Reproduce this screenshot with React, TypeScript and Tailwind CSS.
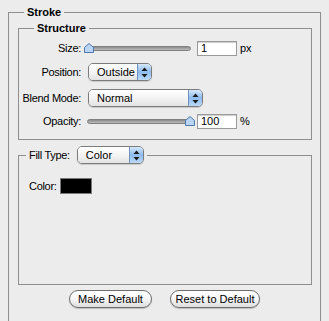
import React from 'react';

const font = { fontFamily: '"Liberation Sans", Arial, sans-serif' };

function Arrows() {
  return (
    <svg width="7" height="11" viewBox="0 0 7 11">
      <path d="M3.5 0.5 L6.5 4 L0.5 4 Z" fill="#1a1a1a" />
      <path d="M3.5 10.5 L6.5 7 L0.5 7 Z" fill="#1a1a1a" />
    </svg>
  );
}

function Popup({ label, width }: { label: string; width: string }) {
  return (
    <div
      className={`${width} h-[18px] flex rounded-[5px] border border-[#7b7b7b] overflow-hidden shadow-[0_1px_1px_rgba(0,0,0,0.15)]`}
    >
      <div className="flex-1 flex items-center pl-[8px] bg-gradient-to-b from-white via-[#f4f4f4] to-[#e3e3e3] text-[11px] text-black">
        {label}
      </div>
      <div className="w-[14px] flex items-center justify-center border-l border-[#6f8fbf] bg-gradient-to-b from-[#d6e8fa] via-[#8dbbee] to-[#bcd9f6]">
        <Arrows />
      </div>
    </div>
  );
}

function Slider({ value }: { value: number }) {
  return (
    <div className="relative w-[110px] h-[15px] flex items-center">
      <div className="mx-[3px] flex-1 h-[5px] rounded-full bg-gradient-to-b from-[#8a8a8a] to-[#bdbdbd] border border-[#7f7f7f]" />
      <svg
        className="absolute top-[2px]"
        style={{ left: `${value * 101}px` }}
        width="10"
        height="10"
        viewBox="0 0 10 10"
      >
        <path d="M5 0.5 L9.5 4.5 L9.5 9.5 L0.5 9.5 L0.5 4.5 Z" fill="#b9d5f3" stroke="#4f78ad" strokeWidth="1" />
      </svg>
    </div>
  );
}

function NumField({ value }: { value: string }) {
  return (
    <div className="w-[40px] h-[15px] border border-[#9a9a9a] bg-white shadow-[inset_0_1px_1px_rgba(0,0,0,0.2)] pl-[3px] text-[11px] leading-[13px] text-black">
      {value}
    </div>
  );
}

function Label({ children }: { children: React.ReactNode }) {
  return (
    <div className="w-[62px] text-right text-[11px] tracking-[-0.3px] text-black whitespace-nowrap">{children}</div>
  );
}

function PillButton({ children, width }: { children: React.ReactNode; width: string }) {
  return (
    <button
      className={`${width} h-[18px] rounded-full border border-[#6e6e6e] bg-gradient-to-b from-white via-[#f6f6f6] to-[#dedede] text-[11px] text-black shadow-[0_1px_1px_rgba(0,0,0,0.2)]`}
    >
      {children}
    </button>
  );
}

export default function App() {
  return (
    <div className="w-[329px] h-[321px] bg-[#ececec] overflow-hidden pt-[5px]" style={font}>
      {/* Stroke */}
      <fieldset className="ml-[8px] w-[313px] h-[340px] border border-[#8e8e8e]">
        <legend className="ml-[15px] px-[3px] text-[11px] font-bold leading-[14px] text-black">Stroke</legend>

        {/* Structure */}
        <fieldset className="ml-[9px] mt-[2px] w-[294px] border border-[#8e8e8e] pb-[10px]">
          <legend className="ml-[15px] px-[3px] text-[11px] font-bold leading-[14px] text-black">Structure</legend>
          <div className="pt-[6px] flex flex-col gap-[7px]">
            <div className="flex items-center h-[15px]">
              <Label>Size:</Label>
              <div className="ml-[3px]">
                <Slider value={0} />
              </div>
              <div className="ml-[3px]">
                <NumField value="1" />
              </div>
              <span className="ml-[3px] text-[11px] text-black">px</span>
            </div>
            <div className="flex items-center h-[18px]">
              <Label>Position:</Label>
              <div className="ml-[7px]">
                <Popup label="Outside" width="w-[64px]" />
              </div>
            </div>
            <div className="flex items-center h-[18px] mt-[1px]">
              <Label>Blend Mode:</Label>
              <div className="ml-[7px]">
                <Popup label="Normal" width="w-[115px]" />
              </div>
            </div>
            <div className="flex items-center h-[15px]">
              <Label>Opacity:</Label>
              <div className="ml-[3px]">
                <Slider value={1} />
              </div>
              <div className="ml-[3px]">
                <NumField value="100" />
              </div>
              <span className="ml-[3px] text-[11px] text-black">%</span>
            </div>
          </div>
        </fieldset>

        {/* Fill Type */}
        <fieldset className="ml-[9px] mt-[6px] w-[294px] h-[139px] border border-[#8e8e8e]">
          <legend className="ml-[7px] px-[3px]">
            <div className="flex items-center gap-[7px] h-[18px]">
              <span className="text-[11px] tracking-[-0.3px] text-black">Fill Type:</span>
              <Popup label="Color" width="w-[67px]" />
            </div>
          </legend>
          <div className="pt-[14px] pl-[10px] flex items-center gap-[3px]">
            <span className="text-[11px] tracking-[-0.3px] text-black">Color:</span>
            <div className="w-[32px] h-[16px] border border-[#7a7a7a] bg-black" />
          </div>
        </fieldset>

        <div className="mt-[5px] flex justify-center gap-[18px]">
          <PillButton width="w-[83px]">Make Default</PillButton>
          <PillButton width="w-[90px]">Reset to Default</PillButton>
        </div>
      </fieldset>
    </div>
  );
}
